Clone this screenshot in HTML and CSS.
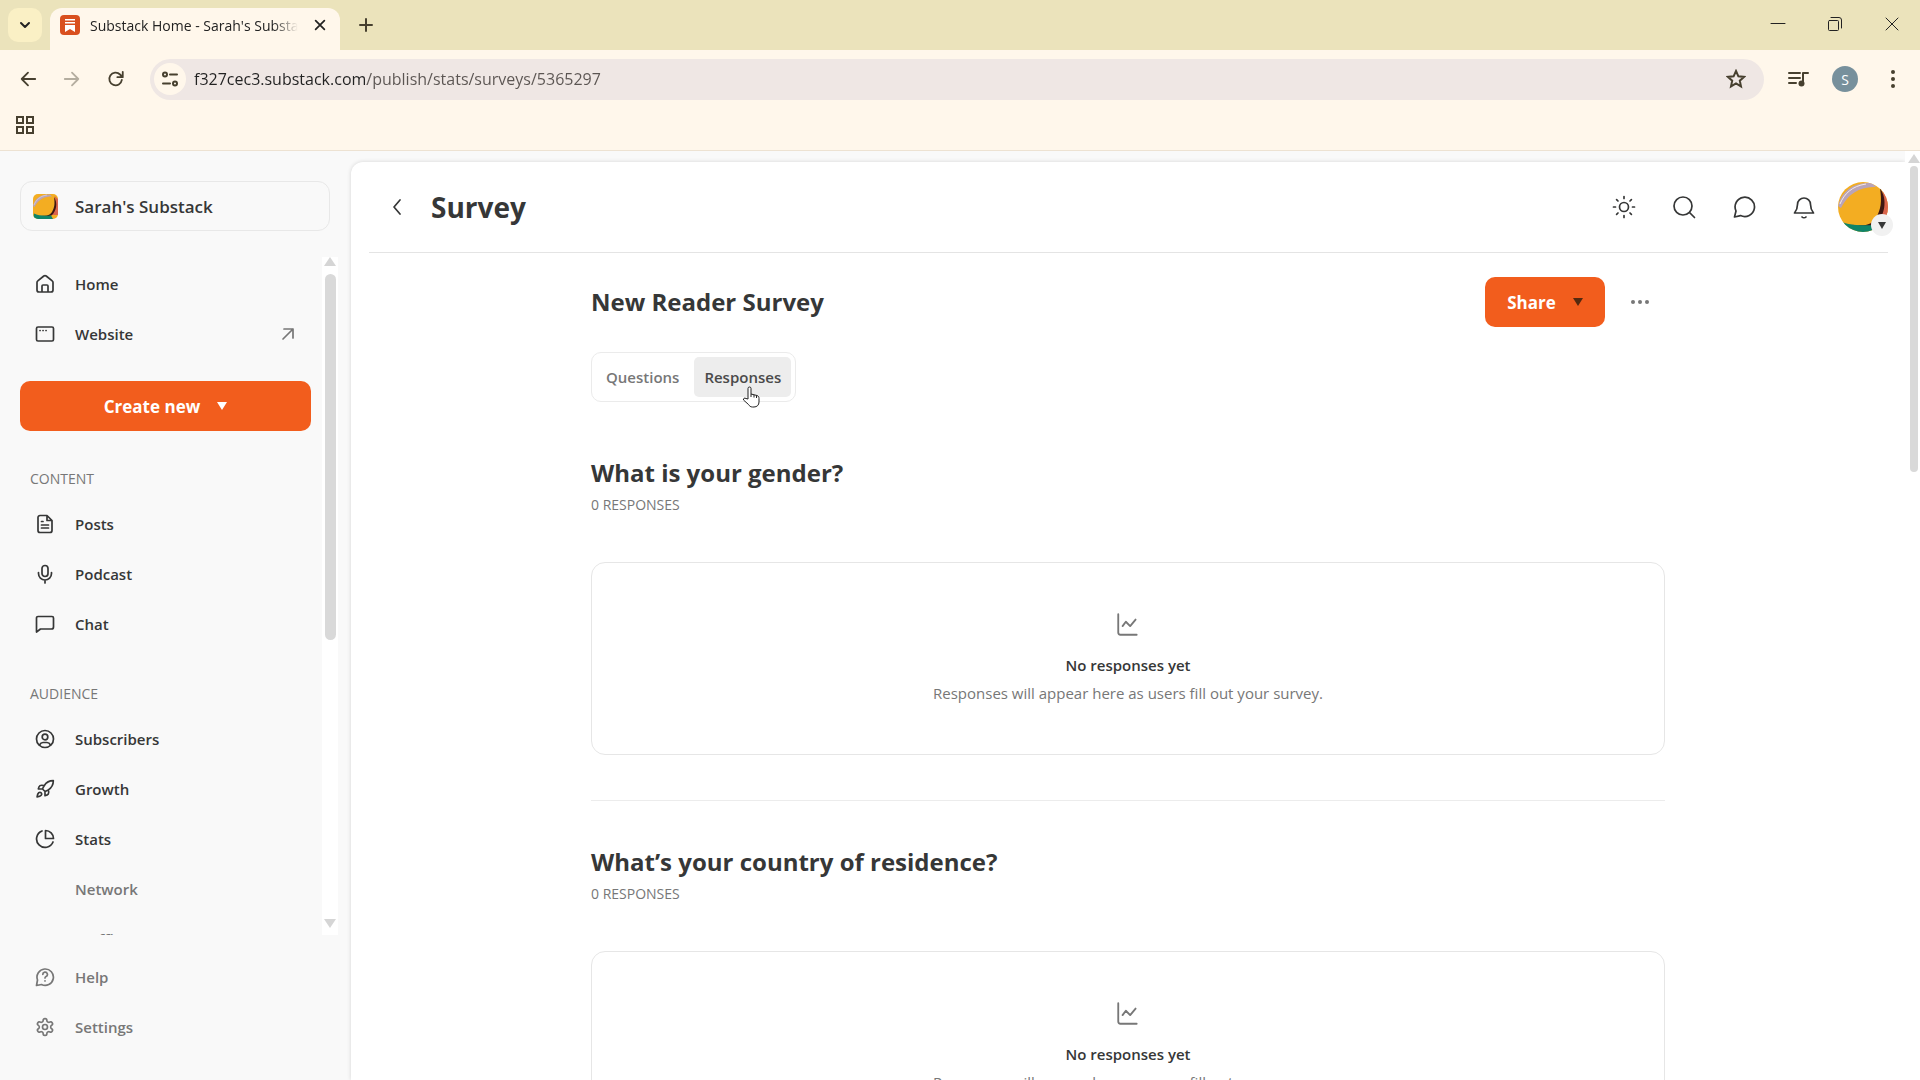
FILE: index.html
```html
<!DOCTYPE html>
<html lang="en">
<head>
    <meta charset="UTF-8">
    <meta name="viewport" content="width=device-width, initial-scale=1.0">
    <title>Substack Home - Sarah's Substack</title>
    <link rel="stylesheet" href="styles.css">
</head>
<body>
    <!-- Shared artwork -->
    <svg class="defs" width="0" height="0">
        <symbol id="mango" viewBox="0 0 50 50">
            <rect width="50" height="50" fill="#f3ad22"/>
            <path d="M0 24C4 8 16 0 34 1L38 5C24 5 12 9 3 26z" fill="#b9a4b8"/>
            <path d="M2 22C6 12 14 4 28 2" fill="none" stroke="#f4e9e6"/>
            <path d="M43 4L50 10V42L36 42C44 34 48 20 43 4z" fill="#d9644c"/>
            <path d="M42 6C50 18 47 34 37 43L28 45L10 42C26 45 34 43 38 36C43 27 44 20 42 6z" fill="#3d1712"/>
            <path d="M2 39C10 43 20 44 36 43L40 50H0z" fill="#0f8468"/>
        </symbol>
        <symbol id="chart" viewBox="0 0 24 24">
            <path d="M3 2v17a2 2 0 0 0 2 2h15M7 13l3-4 4 4 5-6"/>
        </symbol>
    </svg>

    <header class="browser">
        <div class="tab-strip">
            <button class="tab-search" aria-label="Search tabs">
                <svg class="icon bold" width="20" height="20" viewBox="0 0 20 20"><path d="M6 8l4 4 4-4"/></svg>
            </button>
            <div class="tab">
                <svg width="20" height="20" viewBox="0 0 20 20">
                    <rect width="20" height="20" rx="4" fill="#d9501e"/>
                    <path d="M5 4h10v1.500H5zM5 7h10v1.500H5zM5 10h10v7l-5-3-5 3z" fill="#fff"/>
                </svg>
                <span class="tab-title">Substack Home - Sarah's Substack</span>
                <button class="tab-close" aria-label="Close tab">
                    <svg class="icon" width="14" height="14" viewBox="0 0 16 16"><path d="M3 3l10 10M13 3L3 13"/></svg>
                </button>
            </div>
            <button class="tab-new" aria-label="New tab">
                <svg class="icon" width="20" height="20" viewBox="0 0 20 20"><path d="M10 4v12M4 10h12"/></svg>
            </button>
            <div class="window-controls">
                <button aria-label="Minimize"><svg class="icon thin" width="16" height="16" viewBox="0 0 16 16"><path d="M1 7.500h14"/></svg></button>
                <button aria-label="Restore"><svg class="icon thin" width="16" height="16" viewBox="0 0 16 16"><rect x="1.500" y="4.500" width="10" height="10" rx="1"/><path d="M4 1.500h8a2.500 2.500 0 0 1 2.500 2.500v8"/></svg></button>
                <button aria-label="Close"><svg class="icon thin" width="16" height="16" viewBox="0 0 16 16"><path d="M2 2l12 12M14 2L2 14"/></svg></button>
            </div>
        </div>
        <div class="toolbar">
            <button aria-label="Back"><svg class="icon" width="18" height="18" viewBox="0 0 20 20"><path d="M18 10H3M10 3l-7 7 7 7"/></svg></button>
            <button aria-label="Forward" disabled><svg class="icon" width="18" height="18" viewBox="0 0 20 20"><path d="M2 10h15M10 3l7 7-7 7"/></svg></button>
            <button aria-label="Reload"><svg class="icon" width="18" height="18" viewBox="0 0 20 20"><path d="M16.500 11a7 7 0 1 1-2-6L17 7.500M17.500 2v6h-6"/></svg></button>
            <div class="omnibox">
                <button class="site-info" aria-label="Site information">
                    <svg class="icon" width="20" height="20" viewBox="0 0 20 20"><circle cx="5" cy="5.500" r="2"/><path d="M10 5.500h7M3 14.500h7"/><circle cx="15" cy="14.500" r="2"/></svg>
                </button>
                <input class="url" type="text" aria-label="Address" value="f327cec3.substack.com/publish/stats/surveys/5365297">
                <button aria-label="Bookmark">
                    <svg class="icon" width="20" height="20" viewBox="0 0 20 20"><path d="M10 2l2.400 5.300 5.600.6-4.200 3.800 1.200 5.700L10 14.500l-5 2.900 1.200-5.700L2 7.900l5.600-.6z" stroke-linejoin="miter"/></svg>
                </button>
            </div>
            <button aria-label="Media">
                <svg class="icon" width="22" height="22" viewBox="0 0 22 22"><path d="M2 5h11M2 10h11M2 15h7M16 15V5h5"/><circle cx="14.500" cy="15.500" r="3" fill="currentColor" stroke="none"/></svg>
            </button>
            <button class="profile" aria-label="Profile">S</button>
            <button aria-label="Menu">
                <svg width="20" height="20" viewBox="0 0 20 20" fill="currentColor"><circle cx="10" cy="3" r="2"/><circle cx="10" cy="10" r="2"/><circle cx="10" cy="17" r="2"/></svg>
            </button>
        </div>
        <div class="bookmarks">
            <button aria-label="Apps">
                <svg class="icon" width="20" height="20" viewBox="0 0 20 20"><path d="M2 2h6v6H2zM12 2h6v6h-6zM2 12h6v6H2zM12 12h6v6h-6z" stroke-linejoin="miter"/></svg>
            </button>
        </div>
    </header>

    <div class="app">
        <aside class="sidebar">
            <button class="publication">
                <svg class="pub-logo" width="25" height="25"><use href="#mango"/></svg>
                Sarah's Substack
            </button>
            <div class="nav-wrap">
                <nav class="nav">
                    <a href="#">
                        <svg class="icon" width="20" height="20" viewBox="0 0 20 20"><path d="M2 8.500a2 2 0 0 1 .8-1.600L8.800 2a2 2 0 0 1 2.400 0l6 4.900a2 2 0 0 1 .8 1.600V16a2 2 0 0 1-2 2H4a2 2 0 0 1-2-2zM7 18v-6a1 1 0 0 1 1-1h4a1 1 0 0 1 1 1v6"/></svg>
                        Home
                    </a>
                    <a href="#">
                        <svg class="icon" width="20" height="20" viewBox="0 0 20 20"><rect x="1.500" y="3" width="17" height="14" rx="1.500"/><path d="M5 6.500h.1M8 6.500h.1M11 6.500h.1"/></svg>
                        Website
                        <svg class="icon external" width="14" height="14" viewBox="0 0 14 14"><path d="M2 12L12 2M3 2h9v9"/></svg>
                    </a>
                    <button class="create">Create new <span class="caret"></span></button>

                    <h2>Content</h2>
                    <a href="#">
                        <svg class="icon" width="20" height="20" viewBox="0 0 20 20"><path d="M12 1.500H5a2 2 0 0 0-2 2v13a2 2 0 0 0 2 2h10a2 2 0 0 0 2-2v-10zM12 1.500v5h5M6.500 7.500H8M6.500 11h7M6.500 14h7"/></svg>
                        Posts
                    </a>
                    <a href="#">
                        <svg class="icon" width="20" height="20" viewBox="0 0 20 20"><rect x="7" y="1.500" width="6" height="11" rx="3"/><path d="M3.500 8.500v1a6.500 6.500 0 0 0 13 0v-1M10 16v3"/></svg>
                        Podcast
                    </a>
                    <a href="#">
                        <svg class="icon" width="20" height="20" viewBox="0 0 20 20"><path d="M18.500 13a2 2 0 0 1-2 2H5.500L1.500 18V4a1.500 1.500 0 0 1 1.500-1.500h14A1.500 1.500 0 0 1 18.500 4z"/></svg>
                        Chat
                    </a>

                    <h2>Audience</h2>
                    <a href="#">
                        <svg class="icon" width="20" height="20" viewBox="0 0 20 20"><circle cx="10" cy="10" r="8.500"/><circle cx="10" cy="8" r="2.800"/><path d="M4.500 16c1-2 2-2.500 3.500-2.500h4c1.500 0 2.500.5 3.500 2.500"/></svg>
                        Subscribers
                    </a>
                    <a href="#">
                        <svg class="icon heavy" width="20" height="20" viewBox="0 0 24 24"><path d="M4.500 16.500c-1.500 1.260-2 5-2 5s3.740-.5 5-2c.71-.84.7-2.130-.09-2.910a2.180 2.180 0 0 0-2.910-.09zM12 15l-3-3a22 22 0 0 1 2-3.950A12.880 12.880 0 0 1 22 2c0 2.720-.78 7.500-6 11a22.350 22.350 0 0 1-4 2zM9 12H4s.55-3.030 2-4c1.620-1.080 5 0 5 0M12 15v5s3.030-.55 4-2c1.080-1.620 0-5 0-5"/></svg>
                        Growth
                    </a>
                    <a href="#">
                        <svg class="icon" width="20" height="20" viewBox="0 0 20 20"><path d="M7 2a8.500 8.500 0 1 0 11 11"/><path d="M10.500 1.500a8 8 0 0 1 8 8h-8z"/></svg>
                        Stats
                    </a>
                    <a href="#" class="sub">Network</a>
                    <a href="#" class="sub">Traffic</a>
                </nav>
                <div class="scrollbar">
                    <span class="arrow up"></span>
                    <span class="thumb nav-thumb"></span>
                    <span class="arrow down"></span>
                </div>
            </div>
            <nav class="nav nav-footer">
                <a href="#">
                    <svg class="icon" width="20" height="20" viewBox="0 0 20 20"><path d="M1.500 18.500l1-5.500a8.200 8.200 0 1 1 4 4.500zM7.800 7.500a2.300 2.300 0 1 1 3.300 2c-.8.400-1.100.8-1.100 1.500M10 13.800v.2"/></svg>
                    Help
                </a>
                <a href="#">
                    <svg class="icon heavy" width="20" height="20" viewBox="0 0 24 24"><path d="M12.220 2h-.44a2 2 0 0 0-2 2v.18a2 2 0 0 1-1 1.730l-.43.250a2 2 0 0 1-2 0l-.15-.08a2 2 0 0 0-2.730.730l-.22.380a2 2 0 0 0 .730 2.730l.15.1a2 2 0 0 1 1 1.720v.51a2 2 0 0 1-1 1.740l-.15.09a2 2 0 0 0-.730 2.730l.22.380a2 2 0 0 0 2.730.730l.15-.08a2 2 0 0 1 2 0l.43.250a2 2 0 0 1 1 1.730V20a2 2 0 0 0 2 2h.44a2 2 0 0 0 2-2v-.18a2 2 0 0 1 1-1.730l.43-.25a2 2 0 0 1 2 0l.15.08a2 2 0 0 0 2.730-.73l.22-.39a2 2 0 0 0-.73-2.730l-.15-.08a2 2 0 0 1-1-1.740v-.5a2 2 0 0 1 1-1.740l.15-.09a2 2 0 0 0 .73-2.730l-.22-.38a2 2 0 0 0-2.730-.73l-.15.08a2 2 0 0 1-2 0l-.43-.25a2 2 0 0 1-1-1.730V4a2 2 0 0 0-2-2z"/><circle cx="12" cy="12" r="3"/></svg>
                    Settings
                </a>
            </nav>
        </aside>

        <main class="main">
            <div class="topbar">
                <a href="#" class="back" aria-label="Back">
                    <svg class="icon" width="20" height="20" viewBox="0 0 20 20"><path d="M13 3l-6 7 6 7"/></svg>
                </a>
                <h1>Survey</h1>
                <div class="actions">
                    <button aria-label="Theme">
                        <svg class="icon" width="24" height="24" viewBox="0 0 24 24"><circle cx="12" cy="12" r="4.500"/><path d="M12 1.500v2M12 20.500v2M1.500 12h2M20.500 12h2M4.600 4.600L6 6M18 18l1.400 1.400M4.600 19.400L6 18M18 6l1.400-1.400"/></svg>
                    </button>
                    <button aria-label="Search">
                        <svg class="icon" width="24" height="24" viewBox="0 0 24 24"><circle cx="11" cy="11" r="9"/><path d="M17.500 17.500l5 5"/></svg>
                    </button>
                    <button aria-label="Chat">
                        <svg class="icon" width="24" height="24" viewBox="0 0 24 24"><path d="M2.500 22l1.500-6a9.700 9.700 0 1 1 4.500 4.600z"/></svg>
                    </button>
                    <button aria-label="Notifications">
                        <svg class="icon" width="24" height="24" viewBox="0 0 24 24"><path d="M2.500 18c2-2.500 3-5 3-8.500a6.500 6.500 0 0 1 13 0c0 3.500 1 6 3 8.500zM10 22c1 1 3 1 4 0"/></svg>
                    </button>
                    <button class="avatar" aria-label="Account">
                        <svg width="50" height="50"><use href="#mango"/></svg>
                        <span class="badge"><span class="caret"></span></span>
                    </button>
                </div>
            </div>

            <div class="content">
                <div class="title-row">
                    <h2>New Reader Survey</h2>
                    <button class="share">Share <span class="caret"></span></button>
                    <button class="more" aria-label="More">
                        <svg width="20" height="20" viewBox="0 0 20 20" fill="currentColor"><circle cx="3" cy="10" r="2"/><circle cx="10" cy="10" r="2"/><circle cx="17" cy="10" r="2"/></svg>
                    </button>
                </div>
                <div class="tabs" role="tablist">
                    <button role="tab">Questions</button>
                    <button role="tab" class="active" aria-selected="true">
                        Responses
                        <svg class="cursor" width="18" height="22" viewBox="0 0 18 22"><path d="M6 13V2.500a1.500 1.500 0 0 1 3 0V8l6 1.500c1.500.5 2 1.500 2 3V16c0 3-2 5-5 5h-1.500c-2 0-3-1-4-2.500L1.500 14c-.5-1.500 1-2.500 2.500-1.500zM9 8v3M12 9v2.500M14.500 9.500V12" fill="#fff" stroke="#222"/></svg>
                    </button>
                </div>

                <section class="question">
                    <h2>What is your gender?</h2>
                    <p class="count">0 responses</p>
                    <div class="card">
                        <svg class="icon" width="26" height="26"><use href="#chart"/></svg>
                        <h3>No responses yet</h3>
                        <p>Responses will appear here as users fill out your survey.</p>
                    </div>
                </section>
                <section class="question">
                    <h2>What’s your country of residence?</h2>
                    <p class="count">0 responses</p>
                    <div class="card">
                        <svg class="icon" width="26" height="26"><use href="#chart"/></svg>
                        <h3>No responses yet</h3>
                        <p>Responses will appear here as users fill out your survey.</p>
                    </div>
                </section>
            </div>
        </main>
        <div class="scrollbar page-scrollbar">
            <span class="arrow up"></span>
            <span class="thumb page-thumb"></span>
        </div>
    </div>
</body>
</html>
```
FILE: styles.css
```css
* {
    box-sizing: border-box;
}
body {
    margin: 0;
    height: 100vh;
    display: flex;
    flex-direction: column;
    overflow: hidden;
    font-family: "Open Sans", "Noto Sans", sans-serif;
    font-size: 15px;
    color: #363737;
    background: #f9f9f9;
}
h1, h2, h3, p {
    margin: 0;
}
button {
    display: flex;
    align-items: center;
    justify-content: center;
    padding: 0;
    border: none;
    background: none;
    font: inherit;
    color: inherit;
    cursor: pointer;
}
a {
    color: inherit;
    text-decoration: none;
}
.defs {
    position: absolute;
}
.icon {
    flex: none;
    fill: none;
    stroke: currentColor;
    stroke-width: 1.7;
    stroke-linecap: round;
    stroke-linejoin: round;
}
.icon.heavy {
    stroke-width: 2;
}
.caret {
    border: 5px solid transparent;
    border-top: 8px solid currentColor;
    border-bottom: none;
}

/* Browser window */
.browser {
    flex: none;
    background: #fff7eb;
    border-bottom: 1px solid #ede2d2;
    color: #47402f;
}
.browser .icon {
    stroke-width: 2;
}
.browser .icon.thin {
    stroke-width: 1;
}
.tab-strip {
    display: flex;
    align-items: center;
    height: 50px;
    padding-left: 8px;
    background: #ebe3bb;
}
.tab-search {
    width: 34px;
    height: 34px;
    border-radius: 10px;
    background: #faf0c5;
    color: #222;
}
.tab {
    display: flex;
    align-items: center;
    align-self: flex-end;
    width: 290px;
    height: 42px;
    margin-left: 8px;
    padding: 0 10px 8px;
    border-radius: 12px 12px 0 0;
    background: #fff7eb;
    color: #222;
}
.tab-title {
    flex: 1;
    margin: 0 12px 0 10px;
    overflow: hidden;
    white-space: nowrap;
    font-size: 14px;
    mask-image: linear-gradient(90deg, #000 88%, transparent);
}
.tab-close {
    width: 20px;
    height: 20px;
}
.tab-new {
    width: 30px;
    height: 30px;
    margin-left: 11px;
}
.window-controls {
    display: flex;
    align-self: stretch;
    margin-left: auto;
    color: #222;
}
.window-controls button {
    width: 57px;
    height: 48px;
}
.toolbar {
    display: flex;
    align-items: center;
    height: 58px;
    padding: 0 17px 0 18px;
}
.toolbar button {
    flex: none;
    width: 20px;
    height: 30px;
    margin-right: 24px;
}
.toolbar button:last-child {
    margin-right: 0;
}
.toolbar button:disabled {
    opacity: 0.4;
}
.omnibox {
    flex: 1;
    display: flex;
    align-items: center;
    height: 41px;
    margin-right: 24px;
    padding-left: 4px;
    border-radius: 21px;
    background: #efe7e4;
}
.toolbar .site-info {
    width: 32px;
    height: 32px;
    margin-right: 8px;
    border-radius: 50%;
    background: #fff7eb;
}
.omnibox button:last-child {
    margin-right: 18px;
}
.url {
    flex: 1;
    padding: 0;
    border: none;
    outline: none;
    /* host in dark, path in grey */
    background: linear-gradient(90deg, #222 173px, #5b5552 173px);
    background-clip: text;
    -webkit-text-fill-color: transparent;
    font: inherit;
    font-size: 16px;
}
.toolbar .profile {
    width: 26px;
    height: 26px;
    margin-right: 25px;
    border-radius: 50%;
    background: #77909c;
    color: #fff;
    font-size: 14px;
}
.bookmarks {
    display: flex;
    height: 42px;
    padding: 7px 15px;
    align-items: flex-start;
}

/* Sidebar */
.app {
    flex: 1;
    display: flex;
    min-height: 0;
}
.sidebar {
    flex: none;
    display: flex;
    flex-direction: column;
    width: 351px;
    padding: 30px 0 28px 20px;
}
.publication {
    flex: none;
    justify-content: flex-start;
    gap: 17px;
    width: 310px;
    height: 50px;
    padding-left: 12px;
    border: 1px solid #e8e8e8;
    border-radius: 12px;
    font-size: 17px;
    font-weight: 600;
}
.pub-logo {
    border-radius: 5px;
}
.nav-wrap {
    flex: 1;
    display: flex;
    gap: 9px;
    min-height: 0;
    margin: 26px 13px 0 0;
    overflow: hidden;
}
.nav {
    flex: 1;
    padding-top: 2px;
    font-weight: 600;
}
.nav a {
    display: flex;
    align-items: center;
    gap: 20px;
    height: 50px;
    padding: 0 18px 0 15px;
}
.nav .sub {
    padding-left: 55px;
    color: #777;
}
.nav .external {
    margin-left: auto;
    color: #777;
}
.nav h2 {
    margin: 29px 0 4px;
    padding-left: 10px;
    font-size: 14px;
    font-weight: 500;
    line-height: 32px;
    text-transform: uppercase;
    color: #777;
}
.create {
    gap: 17px;
    width: 291px;
    height: 50px;
    margin: 22px 0 32px;
    border-radius: 10px;
    background: #f25d1d;
    color: #fff;
    font-size: 17px;
    font-weight: 700;
}
.nav-footer {
    flex: none;
    padding-top: 17px;
    color: #777;
}

/* Scrollbars */
.scrollbar {
    flex: none;
    display: flex;
    flex-direction: column;
    align-items: center;
    width: 16px;
    background: #fff;
}
.arrow {
    border: 6px solid transparent;
}
.arrow.up {
    border-top: none;
    border-bottom: 9px solid #d5d5d5;
}
.arrow.down {
    margin: auto 0 7px;
    border-bottom: none;
    border-top: 9px solid #d5d5d5;
}
.thumb {
    width: 11px;
    margin-top: 8px;
    border-radius: 6px;
    background: #d9d9d9;
}
.nav-thumb {
    height: 54%;
}
.page-scrollbar {
    width: 15px;
    padding: 3px 0 0 2px;
}
.page-thumb {
    width: 8px;
    height: 33%;
    margin-top: 3px;
}

/* Survey page */
.main {
    flex: 1;
    min-width: 0;
    margin-top: 11px;
    border-radius: 12px 0 0 0;
    background: #fff;
    box-shadow: 0 0 4px rgba(0, 0, 0, 0.15);
    overflow: hidden;
}
.topbar {
    display: flex;
    align-items: center;
    height: 91px;
    margin: 0 17px 0 18px;
    padding-left: 18px;
    border-bottom: 1px solid #e4e4e4;
}
.topbar h1 {
    margin-left: 24px;
    font-size: 28px;
}
.back {
    display: flex;
}
.actions {
    display: flex;
    align-items: center;
    gap: 36px;
    margin-left: auto;
}
.avatar {
    position: relative;
    margin-left: -14px;
}
.avatar svg {
    border-radius: 50%;
}
.badge {
    position: absolute;
    right: -5px;
    bottom: -4px;
    display: flex;
    align-items: center;
    justify-content: center;
    width: 22px;
    height: 22px;
    border-radius: 50%;
    background: #f1f1f1;
}
.badge .caret {
    border-width: 7px 4px 0;
}
.content {
    max-width: 1074px;
    margin: 24px auto 0;
}
.content h2 {
    font-size: 24px;
    line-height: 32px;
}
.title-row {
    display: flex;
    align-items: center;
    margin-bottom: 25px;
}
.share {
    gap: 17px;
    width: 120px;
    height: 50px;
    margin-left: auto;
    border-radius: 10px;
    background: #f25d1d;
    color: #fff;
    font-size: 17px;
    font-weight: 700;
}
.share .caret {
    color: #54290f;
}
.more {
    width: 50px;
    height: 50px;
    margin: 0 0 0 10px;
    color: #777;
}
.tabs {
    display: flex;
    width: fit-content;
    margin-bottom: 10px;
    padding: 4px;
    border: 1px solid #ebebeb;
    border-radius: 10px;
}
.tabs button {
    height: 40px;
    padding: 0 10px;
    border-radius: 5px;
    font-weight: 600;
    color: #777;
}
.tabs .active {
    position: relative;
    margin-left: 5px;
    background: #ededed;
    color: #4a4a4a;
}
.cursor {
    position: absolute;
    left: 48px;
    top: 29px;
}
.question {
    padding: 45px 0;
}
.question + .question {
    border-top: 1px solid #ececec;
}
.count {
    margin: 6px 0 47px;
    font-size: 14px;
    font-weight: 500;
    line-height: 20px;
    text-transform: uppercase;
    color: #777;
}
.card {
    display: flex;
    flex-direction: column;
    align-items: center;
    padding: 49px 20px;
    border: 1px solid #e6e6e6;
    border-radius: 14px;
    color: #777;
}
.card h3 {
    margin: 15px 0 4px;
    font-size: 15px;
    font-weight: 600;
    line-height: 24px;
    color: #363737;
}
.card p {
    line-height: 24px;
}
```
